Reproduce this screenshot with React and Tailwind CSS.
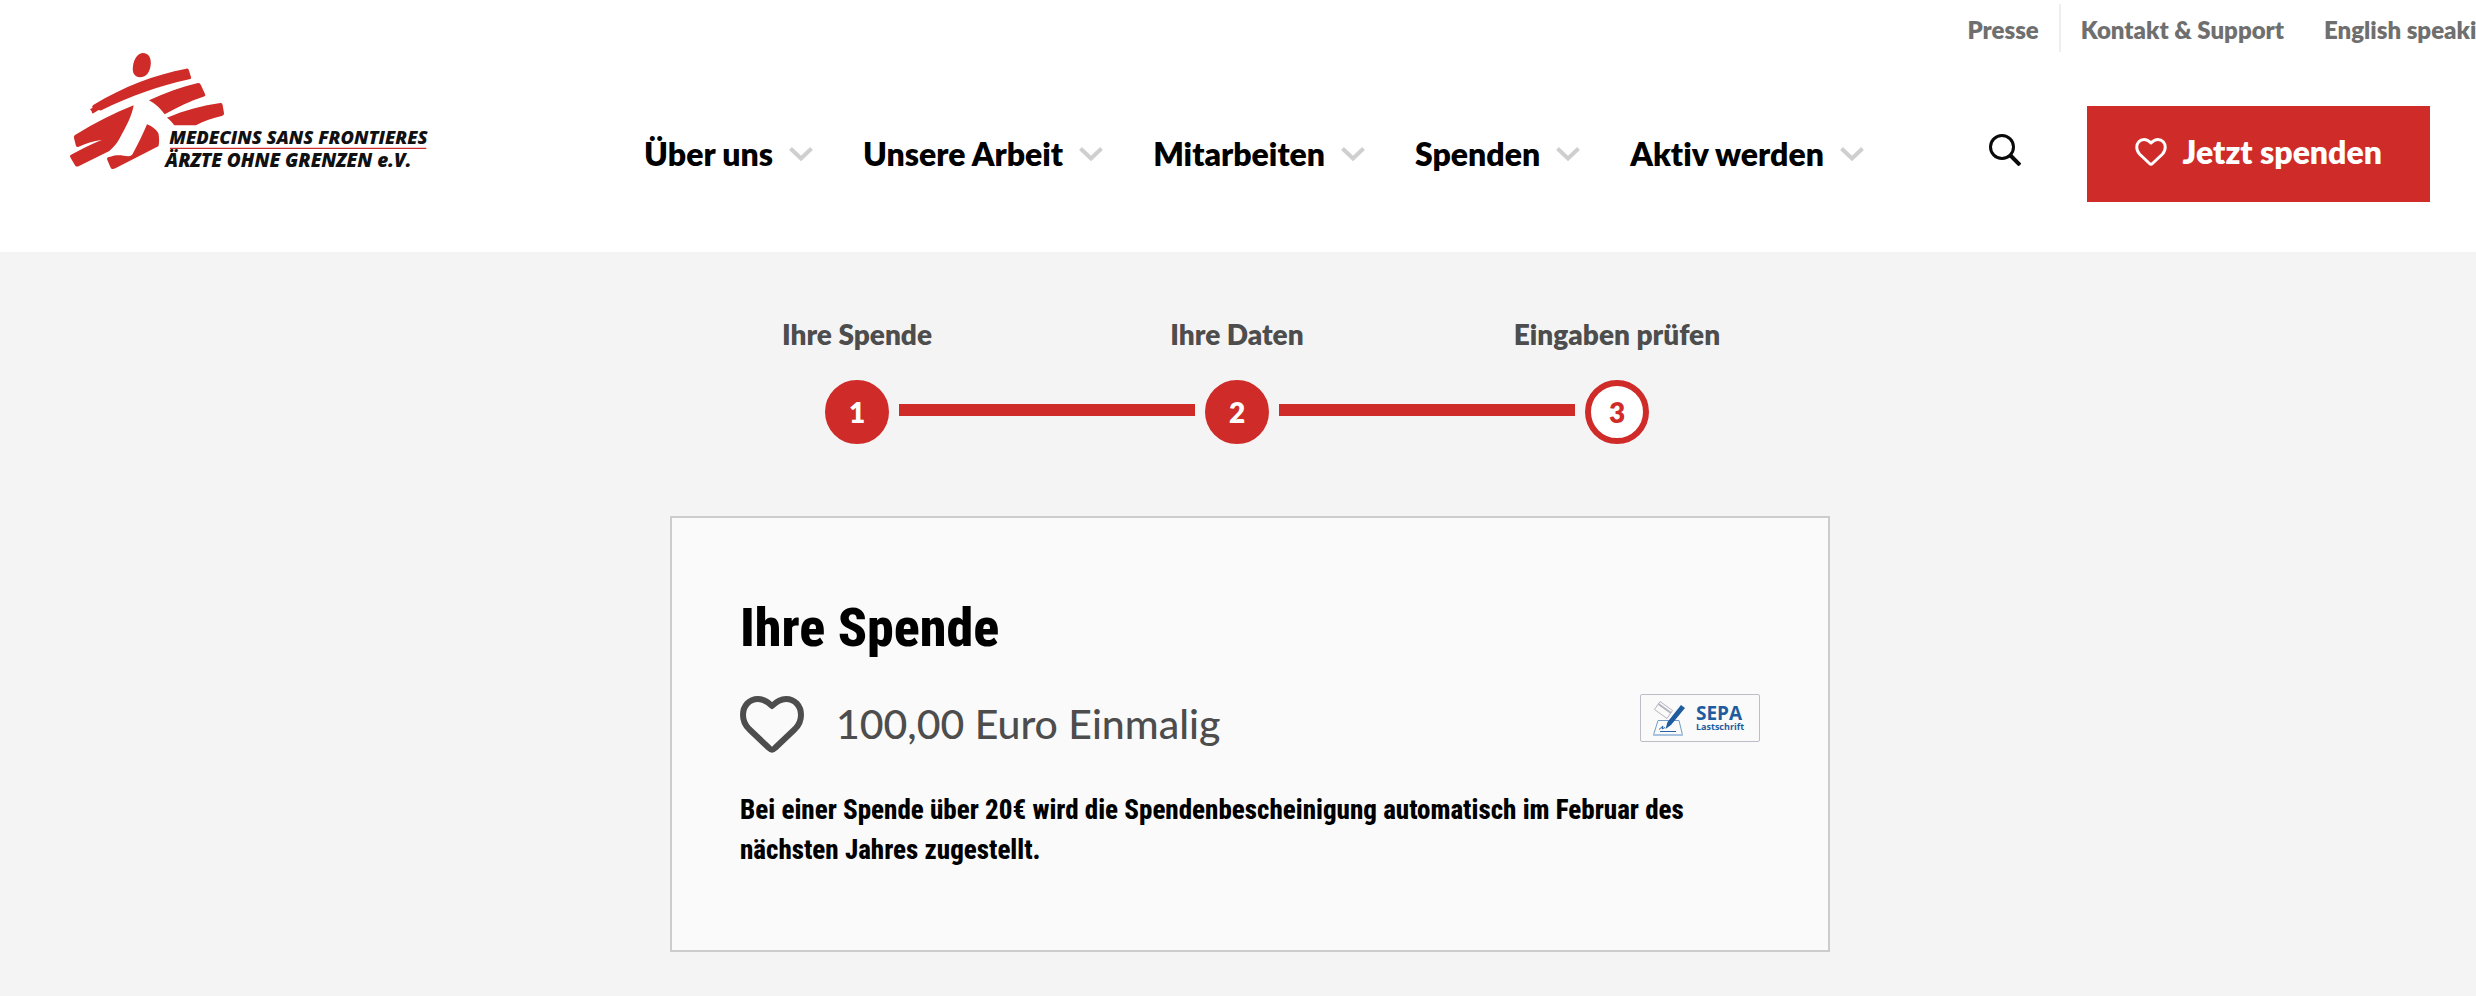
const navItems = ['Über uns', 'Unsere Arbeit', 'Mitarbeiten', 'Spenden', 'Aktiv werden']

const steps = [
  { number: 1, label: 'Ihre Spende', active: false },
  { number: 2, label: 'Ihre Daten', active: false },
  { number: 3, label: 'Eingaben prüfen', active: true }
]

function Logo() {
  return (
    <svg viewBox="60 36 1080 384" className="w-[360px] h-32" role="img" aria-label="Ärzte ohne Grenzen">
      <g fill="#cf2b28">
        <path d="M277 39 C296 38 305 55 302 76 C299 99 287 112 270 112 C253 111 246 98 249 78 C252 57 263 41 277 39 Z" />
        <path d="M409 86 C414 84 416 88 418 95 L423 111 C424 116 422 117 418 118 C330 137 242 168 154 211 C151 213 149 210 146 210 L130 220 C127 222 126 219 125 214 L120 208 L128 203 C125 200 127 197 131 194 C220 140 313 104 409 86 Z" />
        <path d="M297 181 C345 158 395 140 444 129 C449 128 451 131 453 136 L465 162 C467 167 465 168 460 170 C420 183 382 202 344 223 C331 206 316 190 297 181 Z" />
        <path d="M351 233 C404 211 457 196 511 189 C516 188 517 191 518 196 L522 220 C522 225 520 227 515 228 C488 234 462 243 438 256 L373 256 C368 248 360 240 351 233 Z" />
        <path d="M251 196 C246 228 226 264 209 295 C202 310 191 322 178 333 L87 378 C81 381 77 380 74 374 L61 352 C59 347 61 345 66 343 C94 327 124 312 155 300 C130 303 107 311 86 320 C80 322 78 319 77 314 L72 294 C71 288 74 286 79 283 C134 249 191 219 251 196 Z" />
        <path d="M291 253 C304 258 319 268 325 280 C328 292 328 312 325 319 L196 385 C188 389 183 387 181 381 L172 360 C170 354 172 352 178 351 C203 342 218 347 235 349 C243 348 247 345 251 336 C266 308 280 280 291 253 Z" />
        <path d="M360 323 H1129 V327 H360 Z" />
      </g>
      <g fill="#111" className="font-['Open_Sans'] font-extrabold italic">
        <text x="358" y="312" fontSize="55">MEDECINS SANS FRONTIERES</text>
        <text x="346" y="381" fontSize="57">ÄRZTE OHNE GRENZEN e.V.</text>
      </g>
    </svg>
  )
}

function HeartIcon({ className, strokeWidth }) {
  return (
    <svg viewBox="0 0 64 57" className={className} fill="none" stroke="currentColor" strokeWidth={strokeWidth} strokeLinejoin="round" aria-hidden="true">
      <path d="M32 10 C27 5 22 3 18 3 C9 3 3 10 3 19 C3 25 5 29 9 33 L29 52 C31 54 33 54 35 52 L55 33 C59 29 61 25 61 19 C61 10 55 3 46 3 C42 3 37 5 32 10 Z" />
    </svg>
  )
}

function ChevronIcon() {
  return (
    <svg viewBox="0 0 24 16" className="w-6 h-4" fill="none" stroke="#cfcfcf" strokeWidth="4" aria-hidden="true">
      <path d="M1.5 2.5 L12 12.5 L22.5 2.5" />
    </svg>
  )
}

function SepaBadge() {
  return (
    <div className="flex h-12 w-[120px] items-center gap-[11px] rounded-xs border border-[#bdbdc7] pl-3 font-['Open_Sans',sans-serif] font-bold text-[#1f5c9e]">
      <svg viewBox="13 4 32 38" className="w-8 h-[38px]" aria-hidden="true">
        <g fill="none" stroke="#b4b4c0">
          <path d="M20 6.500 L32.500 15.500 L27 23.500 L14.500 14.500 Z" />
          <path d="M18.500 9 L31 18" strokeWidth="2" />
        </g>
        <path d="M18 25.500 H39 L42.500 40 H13.500 Z" fill="none" stroke="#6f9bc8" />
        <path d="M13 40 H43" stroke="#a9c3de" strokeWidth="2" />
        <path d="M20 36.500 H36" stroke="#2a63a3" />
        <path d="M19 34.500 L23 31 L22 34 L25 32.500" fill="none" stroke="#2a63a3" />
        <path d="M41 10 L45 13 L31 30 L25.500 34 L27.500 27 Z" fill="#1f5c9e" />
      </svg>
      <div>
        <p className="text-[19px] leading-[18px]">SEPA</p>
        <p className="text-[9px] leading-[10px]">Lastschrift</p>
      </div>
    </div>
  )
}

function Header() {
  return (
    <header className="bg-white">
      <div className="flex h-[52px] items-end justify-end overflow-hidden text-2xl font-extrabold text-[#6f6f6f] whitespace-nowrap">
        <a href="#presse" className="flex h-12 items-center pt-1 pr-5">Presse</a>
        <a href="#kontakt" className="flex h-12 items-center border-l-2 border-[#eee] pt-1 pl-5 pr-10">Kontakt &amp; Support</a>
        <a href="#english" className="flex h-12 w-[152px] items-center pt-1">English speaking</a>
      </div>
      <div className="flex items-start pl-[70px] pr-[46px]">
        <a href="#start" className="shrink-0"><Logo /></a>
        <div className="flex flex-1 items-center pt-[54px] pb-[50px] pl-[214px]">
          <nav className="flex gap-[50px] text-[32px] leading-10 font-extrabold text-black whitespace-nowrap">
            {navItems.map(item => (
              <a key={item} href="#menu" className="flex items-center gap-4">
                {item}
                <ChevronIcon />
              </a>
            ))}
          </nav>
          <button type="button" aria-label="Suche" className="ml-auto pb-2">
            <svg viewBox="0 0 32 32" className="size-8" fill="none" stroke="#0a0a0a" strokeWidth="3" aria-hidden="true">
              <circle cx="13" cy="13" r="11.500" />
              <path d="M21 21 L31 31" strokeWidth="4" />
            </svg>
          </button>
          <button type="button" className="ml-[66px] flex h-24 items-center gap-4 bg-[#cf2b28] px-12 pb-1 text-[32px] leading-10 font-extrabold text-white whitespace-nowrap">
            <HeartIcon className="w-8 h-7" strokeWidth="6" />
            Jetzt spenden
          </button>
        </div>
      </div>
    </header>
  )
}

function Steps() {
  return (
    <div className="pr-0.5">
      <ol className="mx-auto grid max-w-[1140px] grid-cols-3">
        {steps.map((step, idx) => (
          <li key={step.number} className="flex flex-col gap-[26px]">
            <p className="text-center text-[28px] leading-10 font-extrabold text-[#4d4d4d]">{step.label}</p>
            <div className="flex items-center gap-[10px]">
              <div className={`mb-1 h-3 flex-1 ${idx > 0 ? 'bg-[#cf2b28]' : ''}`}></div>
              <span className={`flex size-16 items-center justify-center rounded-full border-6 border-[#cf2b28] text-[28px] font-extrabold ${
                step.active ? 'bg-white text-[#cf2b28]' : 'bg-[#cf2b28] text-white'
              }`}>
                {step.number}
              </span>
              <div className={`mb-1 h-3 flex-1 ${idx < steps.length - 1 ? 'bg-[#cf2b28]' : ''}`}></div>
            </div>
          </li>
        ))}
      </ol>
    </div>
  )
}

export default function App() {
  return (
    <div className="min-h-screen overflow-x-hidden bg-[#f4f4f4] font-[Lato,sans-serif] [font-variant-ligatures:none]">
      <Header />
      <main className="pt-[62px] pb-11">
        <Steps />
        <div className="mt-[72px] pl-6">
          <section className="mx-auto max-w-[1160px] border-2 border-[#ccc] bg-[#fafafa] px-[68px] pt-[78px] pb-20">
            <h1 className="font-['Roboto_Condensed',sans-serif] text-[54px] leading-16 font-extrabold text-black">Ihre Spende</h1>
            <div className="mt-8 flex h-16 items-center text-[#4d4d4d]">
              <HeartIcon className="w-16 h-[57px]" strokeWidth="6" />
              <p className="ml-8 text-[41px] leading-12 font-medium">100,00 Euro Einmalig</p>
              <div className="ml-auto pb-3"><SepaBadge /></div>
            </div>
            <p className="mt-[34px] font-['Roboto_Condensed',sans-serif] text-[27px] leading-10 font-extrabold text-black">
              Bei einer Spende über 20€ wird die Spendenbescheinigung automatisch im Februar des nächsten Jahres zugestellt.
            </p>
          </section>
        </div>
      </main>
    </div>
  )
}
